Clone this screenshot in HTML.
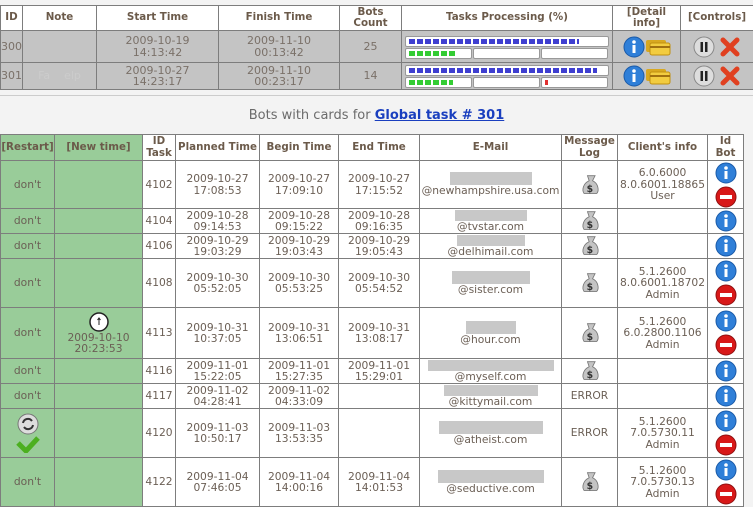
<!DOCTYPE html>
<html><head><meta charset="utf-8"><style>
body{margin:0;background:#f3f3f3;font-family:"DejaVu Sans","Liberation Sans",sans-serif;font-size:10.7px;color:#6b5f55;width:753px;height:506px;overflow:hidden;position:relative}
table{border-collapse:collapse;table-layout:fixed;position:absolute;left:0}
td,th{border:1px solid #7d7d7d;text-align:center;padding:0;overflow:hidden;white-space:nowrap;line-height:11.5px}
th{font-weight:bold;color:#6b5a4a;background:#fff;font-size:10.3px}
#t1{top:5px;width:753px}
#t1 td{background:#c4c4c4;color:#7a7068;font-size:11px;line-height:11.5px}
#t2{top:134px;width:743px}
#t2 td{background:#fff}
#t2 td.g{background:#99cc99}
.bar{height:9px;border:1px solid #999;border-radius:2px;background:#fff;margin:1px 3px;position:relative}
.row{display:flex;margin:0 3px}
.row .bar{flex:1;margin:0 1px 0 0}
.seg{position:absolute;top:2px;height:5px}
.bl{background:repeating-linear-gradient(90deg,#3f3fd0 0 6px,transparent 6px 8px)}
.gr{background:repeating-linear-gradient(90deg,#33cc33 0 6px,transparent 6px 8px)}
.blur{display:block;margin:0 auto;height:11px;background:#c8c8c8}
svg{vertical-align:middle}
</style></head><body>
<table id="t1">
<colgroup><col style="width:22px"><col style="width:74px"><col style="width:122px"><col style="width:121px"><col style="width:62px"><col style="width:211px"><col style="width:68px"><col style="width:73px"></colgroup>
<tr style="height:25px"><th>ID</th><th>Note</th><th>Start Time</th><th>Finish Time</th><th>Bots<br>Count</th><th>Tasks Processing (%)</th><th>[Detail<br>info]</th><th>[Controls]</th></tr>
<tr style="height:32px"><td style="text-align:left">300</td><td></td><td>2009-10-19<br>14:13:42</td><td>2009-11-10<br>00:13:42</td><td>25</td>
<td><div class="bar"><div class="seg bl" style="left:3px;width:170px"></div></div><div class="row"><div class="bar"><div class="seg gr" style="left:3px;width:46px"></div></div><div class="bar"></div><div class="bar"></div></div></td>
<td>INFOCARD</td><td>CTRL</td></tr>
<tr style="height:27px"><td style="text-align:left">301</td><td style="color:#ccc">Fa&nbsp;&nbsp;&nbsp;&nbsp;elp</td><td>2009-10-27<br>14:23:17</td><td>2009-11-10<br>00:23:17</td><td>14</td>
<td><div class="bar"><div class="seg bl" style="left:3px;width:188px"></div></div><div class="row"><div class="bar"><div class="seg gr" style="left:3px;width:44px"></div></div><div class="bar"></div><div class="bar"><div class="seg" style="left:3px;width:3px;background:#e03030"></div></div></div></td>
<td>INFOCARD</td><td>CTRL</td></tr>
</table>
<div style="position:absolute;top:95px;left:0;width:753px;height:1px;background:#ccc"></div>
<div style="position:absolute;top:108px;left:0;width:753px;text-align:center;font-size:13px;color:#6b6b6b">Bots with cards for <a style="color:#1a3fbf;font-weight:bold;text-decoration:underline">Global task # 301</a></div>
<table id="t2">
<colgroup><col style="width:54px"><col style="width:88px"><col style="width:33px"><col style="width:84px"><col style="width:79px"><col style="width:81px"><col style="width:142px"><col style="width:56px"><col style="width:90px"><col style="width:36px"></colgroup>
<tr style="height:26px"><th style="background:#99cc99">[Restart]</th><th style="background:#99cc99">[New time]</th><th>ID<br>Task</th><th>Planned Time</th><th>Begin Time</th><th>End Time</th><th>E-Mail</th><th>Message<br>Log</th><th>Client's info</th><th>Id<br>Bot</th></tr>
<tr style="height:48px"><td class="g">don't</td><td class="g"></td><td>4102</td><td>2009-10-27<br>17:08:53</td><td>2009-10-27<br>17:09:10</td><td>2009-10-27<br>17:15:52</td><td><span class="blur" style="width:82px;height:13px"></span>@newhampshire.usa.com</td><td>$BAG</td><td>6.0.6000<br>8.0.6001.18865<br>User</td><td>IINFO<br>MINUS</td></tr>
<tr style="height:25px"><td class="g">don't</td><td class="g"></td><td>4104</td><td>2009-10-28<br>09:14:53</td><td>2009-10-28<br>09:15:22</td><td>2009-10-28<br>09:16:35</td><td><span class="blur" style="width:72px"></span>@tvstar.com</td><td>$BAG</td><td></td><td>IINFO</td></tr>
<tr style="height:25px"><td class="g">don't</td><td class="g"></td><td>4106</td><td>2009-10-29<br>19:03:29</td><td>2009-10-29<br>19:03:43</td><td>2009-10-29<br>19:05:43</td><td><span class="blur" style="width:68px"></span>@delhimail.com</td><td>$BAG</td><td></td><td>IINFO</td></tr>
<tr style="height:49px"><td class="g">don't</td><td class="g"></td><td>4108</td><td>2009-10-30<br>05:52:05</td><td>2009-10-30<br>05:53:25</td><td>2009-10-30<br>05:54:52</td><td><span class="blur" style="width:78px;height:13px"></span>@sister.com</td><td>$BAG</td><td>5.1.2600<br>8.0.6001.18702<br>Admin</td><td>IINFO<br>MINUS</td></tr>
<tr style="height:51px"><td class="g">don't</td><td class="g"><svg width="20" height="20"><circle cx="10" cy="10" r="9" fill="#fff" stroke="#222" stroke-width="1.5"/><path d="M10 6v7M8.5 8l1.5-2 1.5 2" stroke="#222" fill="none"/></svg><br>2009-10-10<br>20:23:53</td><td>4113</td><td>2009-10-31<br>10:37:05</td><td>2009-10-31<br>13:06:51</td><td>2009-10-31<br>13:08:17</td><td><span class="blur" style="width:50px;height:13px"></span>@hour.com</td><td>$BAG</td><td>5.1.2600<br>6.0.2800.1106<br>Admin</td><td>IINFO<br>MINUS</td></tr>
<tr style="height:25px"><td class="g">don't</td><td class="g"></td><td>4116</td><td>2009-11-01<br>15:22:05</td><td>2009-11-01<br>15:27:35</td><td>2009-11-01<br>15:29:01</td><td><span class="blur" style="width:126px"></span>@myself.com</td><td>$BAG</td><td></td><td>IINFO</td></tr>
<tr style="height:25px"><td class="g">don't</td><td class="g"></td><td>4117</td><td>2009-11-02<br>04:28:41</td><td>2009-11-02<br>04:33:09</td><td></td><td><span class="blur" style="width:94px"></span>@kittymail.com</td><td>ERROR</td><td></td><td>IINFO</td></tr>
<tr style="height:49px"><td class="g"><svg width="22" height="22"><circle cx="11" cy="11" r="10" fill="#ddd" stroke="#777"/><path d="M6 10a5 5 0 0 1 9-2M16 12a5 5 0 0 1-9 2" stroke="#333" stroke-width="2" fill="none"/></svg><br><svg width="24" height="18"><path d="M2 8l8 8L22 3" stroke="#4caf20" stroke-width="5" fill="none"/></svg></td><td class="g"></td><td>4120</td><td>2009-11-03<br>10:50:17</td><td>2009-11-03<br>13:53:35</td><td></td><td><span class="blur" style="width:104px;height:13px"></span>@atheist.com</td><td>ERROR</td><td>5.1.2600<br>7.0.5730.11<br>Admin</td><td>IINFO<br>MINUS</td></tr>
<tr style="height:49px"><td class="g">don't</td><td class="g"></td><td>4122</td><td>2009-11-04<br>07:46:05</td><td>2009-11-04<br>14:00:16</td><td>2009-11-04<br>14:01:53</td><td><span class="blur" style="width:106px;height:13px"></span>@seductive.com</td><td>$BAG</td><td>5.1.2600<br>7.0.5730.13<br>Admin</td><td>IINFO<br>MINUS</td></tr>
</table>
<script>
var I='<svg width="22" height="22" style="display:block;margin:0 auto"><circle cx="11" cy="11" r="10" fill="#2f7fd8" stroke="#1a5aa8"/><rect x="9.5" y="9" width="3" height="8" fill="#fff"/><circle cx="11" cy="6" r="1.8" fill="#fff"/></svg>';
var M='<svg width="22" height="22" style="display:block;margin:2px auto 0"><circle cx="11" cy="11" r="10" fill="#d81818" stroke="#901010"/><rect x="5" y="9" width="12" height="4" fill="#fff"/></svg>';
var B='<svg width="22" height="22" viewBox="0 0 24 26" style="display:block;margin:0 auto"><path d="M9 2h9l-3 6c7 3 8 12 5 15H5C2 19 4 11 11 8z" fill="#c4c4c4" stroke="#777"/><text x="8" y="21" font-size="11" font-weight="bold" fill="#333" font-family="DejaVu Sans">$</text></svg>';
var C='<svg width="22" height="22"><circle cx="11" cy="11" r="10" fill="#2f7fd8" stroke="#1a5aa8"/><rect x="9.5" y="9" width="3" height="8" fill="#fff"/><circle cx="11" cy="6" r="1.8" fill="#fff"/></svg><svg width="26" height="18"><rect x="1" y="2" width="20" height="12" rx="2" fill="#d8a820"/><rect x="5" y="5" width="20" height="12" rx="2" fill="#f2cc40" stroke="#c09010"/><rect x="5" y="8" width="20" height="2" fill="#a07010"/></svg>';
var K='<svg width="22" height="22"><circle cx="11" cy="11" r="10" fill="#ddd" stroke="#888"/><rect x="7.5" y="6" width="2.5" height="10" fill="#222"/><rect x="12" y="6" width="2.5" height="10" fill="#222"/></svg> <svg width="22" height="22"><path d="M4 4L18 18M18 4L4 18" stroke="#e04020" stroke-width="5" stroke-linecap="round"/></svg>';
document.querySelectorAll('td').forEach(function(td){var h=td.innerHTML;if(h=='$BAG')td.innerHTML=B;else if(h=='INFOCARD')td.innerHTML=C;else if(h=='CTRL')td.innerHTML=K;else if(h.indexOf('IINFO')==0)td.innerHTML=h.replace('IINFO',I).replace('<br>MINUS',M);});
</script>
</body></html>
